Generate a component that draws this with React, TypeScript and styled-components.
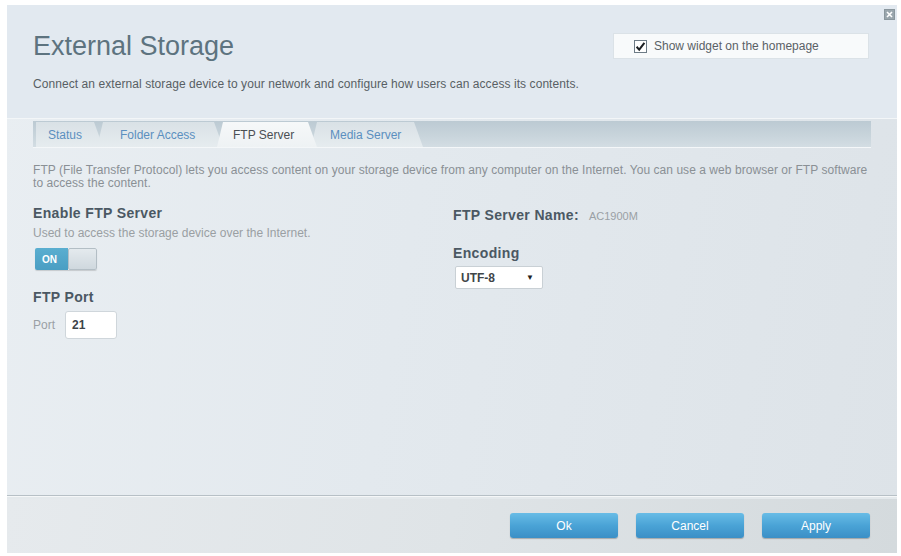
import styled, { createGlobalStyle } from "styled-components";

const GlobalStyle = createGlobalStyle`
  html, body {
    margin: 0;
    padding: 0;
    background: #ffffff;
  }
  body {
    font-family: "Liberation Sans", Arial, sans-serif;
  }
`;

const Panel = styled.div`
  position: relative;
  margin: 5px 4px 0 7px;
  width: 890px;
  height: 548px;
  display: flex;
  flex-direction: column;
  background: linear-gradient(100deg, #e9eef2 0%, #e3e9ee 45%, #dde3e8 100%);
`;

const CloseBox = styled.div`
  position: absolute;
  top: 4px;
  right: 2px;
  width: 11px;
  height: 11px;
  background: #9aa6ad;
  border: 1px solid #8a969d;
  box-sizing: border-box;
  display: flex;
  align-items: center;
  justify-content: center;
`;

const Header = styled.div`
  height: 114px;
  box-sizing: border-box;
  padding: 0 28px 0 26px;
  display: flex;
  justify-content: space-between;
  background: #e2e9f0;
  border-bottom: 1px solid #f3f6f8;
`;

const TitleBlock = styled.div`
  padding-top: 26px;
`;

const Title = styled.h1`
  margin: 0;
  font-size: 27px;
  line-height: 30px;
  font-weight: normal;
  color: #5d737f;
`;

const Subtitle = styled.p`
  margin: 15px 0 0;
  font-size: 12px;
  line-height: 16px;
  letter-spacing: 0.07px;
  color: #585f64;
`;

const WidgetBox = styled.label`
  margin-top: 28px;
  width: 256px;
  height: 26px;
  box-sizing: border-box;
  padding-left: 20px;
  display: flex;
  align-items: center;
  gap: 7px;
  background: #f8fafb;
  border: 1px solid #dbe2e7;
  font-size: 12px;
  color: #5a6166;
`;

const Body = styled.div`
  flex: 1;
  padding: 2px 26px 0;
  display: flex;
  flex-direction: column;
`;

const TabBar = styled.div`
  height: 26px;
  display: flex;
  align-items: flex-end;
  padding-left: 3px;
  background: linear-gradient(180deg, #bccad3 0%, #c9d5dc 60%, #d3dde3 100%);
  border-bottom: 1px solid #f4f7f9;
`;

const Tab = styled.div<{ $active?: boolean; $w: number; $pad: number }>`
  width: ${(p) => p.$w}px;
  height: 25px;
  box-sizing: border-box;
  padding-left: ${(p) => p.$pad}px;
  margin-right: -6px;
  display: flex;
  align-items: center;
  font-size: 12px;
  clip-path: polygon(0 100%, 6px 0, calc(100% - 9px) 0, 100% 100%);
  background: ${(p) =>
    p.$active
      ? "linear-gradient(180deg, #f6f8f9, #eef2f4)"
      : "linear-gradient(180deg, #d9e1e6, #e6ecef)"};
  color: ${(p) => (p.$active ? "#4a4f53" : "#5b8fbf")};
  z-index: ${(p) => (p.$active ? 2 : 1)};

  &:first-child {
    clip-path: polygon(0 0, calc(100% - 9px) 0, 100% 100%, 0 100%);
  }
`;

const Description = styled.p`
  margin: 16px 0 0;
  font-size: 12px;
  line-height: 13px;
  letter-spacing: 0.05px;
  color: #8a9095;
`;

const Columns = styled.div`
  display: grid;
  grid-template-columns: 420px 1fr;
  margin-top: 15px;
`;

const Column = styled.div`
  display: flex;
  flex-direction: column;
`;

const Heading = styled.div<{ $gap?: number }>`
  margin-top: ${(p) => p.$gap ?? 0}px;
  font-size: 14px;
  line-height: 17px;
  font-weight: bold;
  letter-spacing: 0.35px;
  color: #4b5863;
  display: flex;
  align-items: baseline;
  gap: 10px;
`;

const Value = styled.span`
  font-size: 11px;
  font-weight: normal;
  letter-spacing: 0;
  color: #9aa0a5;
`;

const Hint = styled.div`
  margin-top: 4px;
  font-size: 12px;
  line-height: 14px;
  color: #9a9fa3;
`;

const Toggle = styled.div`
  margin: 8px 0 0 2px;
  width: 62px;
  height: 22px;
  display: flex;
  border-radius: 2px;
  overflow: hidden;
  box-shadow: 0 1px 1px rgba(0, 0, 0, 0.15);
`;

const ToggleOn = styled.div`
  width: 33px;
  display: flex;
  align-items: center;
  padding-left: 7px;
  box-sizing: border-box;
  background: linear-gradient(180deg, #5aaed0, #4a9ec3);
  color: #ffffff;
  font-size: 10px;
  font-weight: bold;
`;

const ToggleKnob = styled.div`
  flex: 1;
  background: linear-gradient(180deg, #e4eaee, #cfd8de);
  border: 1px solid #b3bec5;
  border-radius: 2px;
`;

const PortRow = styled.div`
  margin-top: 5px;
  display: flex;
  align-items: center;
  gap: 10px;
  font-size: 12px;
  color: #9aa0a5;
`;

const PortInput = styled.div`
  width: 52px;
  height: 28px;
  box-sizing: border-box;
  padding-left: 6px;
  display: flex;
  align-items: center;
  background: #ffffff;
  border: 1px solid #cfd6db;
  border-radius: 3px;
  font-size: 12px;
  font-weight: bold;
  color: #3d4348;
`;

const Select = styled.div`
  margin: 4px 0 0 2px;
  width: 88px;
  height: 23px;
  box-sizing: border-box;
  padding: 0 8px 0 5px;
  display: flex;
  align-items: center;
  justify-content: space-between;
  background: #ffffff;
  border: 1px solid #c9d0d5;
  border-radius: 2px;
  font-size: 12px;
  font-weight: bold;
  color: #3f4549;
`;

const Arrow = styled.span`
  font-size: 8px;
  color: #222;
`;

const Footer = styled.div`
  height: 58px;
  box-sizing: border-box;
  padding: 17px 27px 0 0;
  display: flex;
  justify-content: flex-end;
  gap: 18px;
  border-top: 1px solid #b7c0c6;
  box-shadow: inset 0 1px 0 #f5f7f8, inset 0 3px 0 #e4e9ec;
  background: linear-gradient(100deg, #e6eaed 0%, #dfe4e7 50%, #d4dadd 100%);
`;

const Button = styled.button`
  width: 108px;
  height: 25px;
  border: none;
  border-radius: 3px;
  background: linear-gradient(180deg, #68bce6 0%, #4aa3d6 50%, #3b8fc6 100%);
  box-shadow: 0 1px 1px rgba(0, 0, 0, 0.25);
  color: #ffffff;
  font-family: "Liberation Sans", Arial, sans-serif;
  font-size: 12px;
`;

function CheckIcon() {
  return (
    <svg width="13" height="13" viewBox="0 0 13 13">
      <rect x="0.5" y="0.5" width="12" height="12" fill="#ffffff" stroke="#6d7b86" />
      <path d="M2.6 6.8 L5.2 9.6 L10.4 2.8" fill="none" stroke="#1b1f22" strokeWidth="2" />
    </svg>
  );
}

export default function App() {
  return (
    <>
      <GlobalStyle />
      <Panel>
        <CloseBox>
          <svg width="7" height="7" viewBox="0 0 7 7">
            <path d="M1 1 L6 6 M6 1 L1 6" stroke="#ffffff" strokeWidth="1.6" />
          </svg>
        </CloseBox>
        <Header>
          <TitleBlock>
            <Title>External Storage</Title>
            <Subtitle>
              Connect an external storage device to your network and configure how users can access its contents.
            </Subtitle>
          </TitleBlock>
          <WidgetBox>
            <CheckIcon />
            Show widget on the homepage
          </WidgetBox>
        </Header>
        <Body>
          <TabBar>
            <Tab $w={67} $pad={12}>Status</Tab>
            <Tab $w={126} $pad={23}>Folder Access</Tab>
            <Tab $active $w={100} $pad={16}>FTP Server</Tab>
            <Tab $w={112} $pad={19}>Media Server</Tab>
          </TabBar>
          <Description>
            FTP (File Transfer Protocol) lets you access content on your storage device from any computer on the Internet. You can use a web browser or FTP software to access the content.
          </Description>
          <Columns>
            <Column>
              <Heading>Enable FTP Server</Heading>
              <Hint>Used to access the storage device over the Internet.</Hint>
              <Toggle>
                <ToggleOn>ON</ToggleOn>
                <ToggleKnob />
              </Toggle>
              <Heading $gap={19}>FTP Port</Heading>
              <PortRow>
                Port
                <PortInput>21</PortInput>
              </PortRow>
            </Column>
            <Column>
              <Heading $gap={2}>
                FTP Server Name: <Value>AC1900M</Value>
              </Heading>
              <Heading $gap={20}>Encoding</Heading>
              <Select>
                UTF-8
                <Arrow>▼</Arrow>
              </Select>
            </Column>
          </Columns>
        </Body>
        <Footer>
          <Button>Ok</Button>
          <Button>Cancel</Button>
          <Button>Apply</Button>
        </Footer>
      </Panel>
    </>
  );
}
